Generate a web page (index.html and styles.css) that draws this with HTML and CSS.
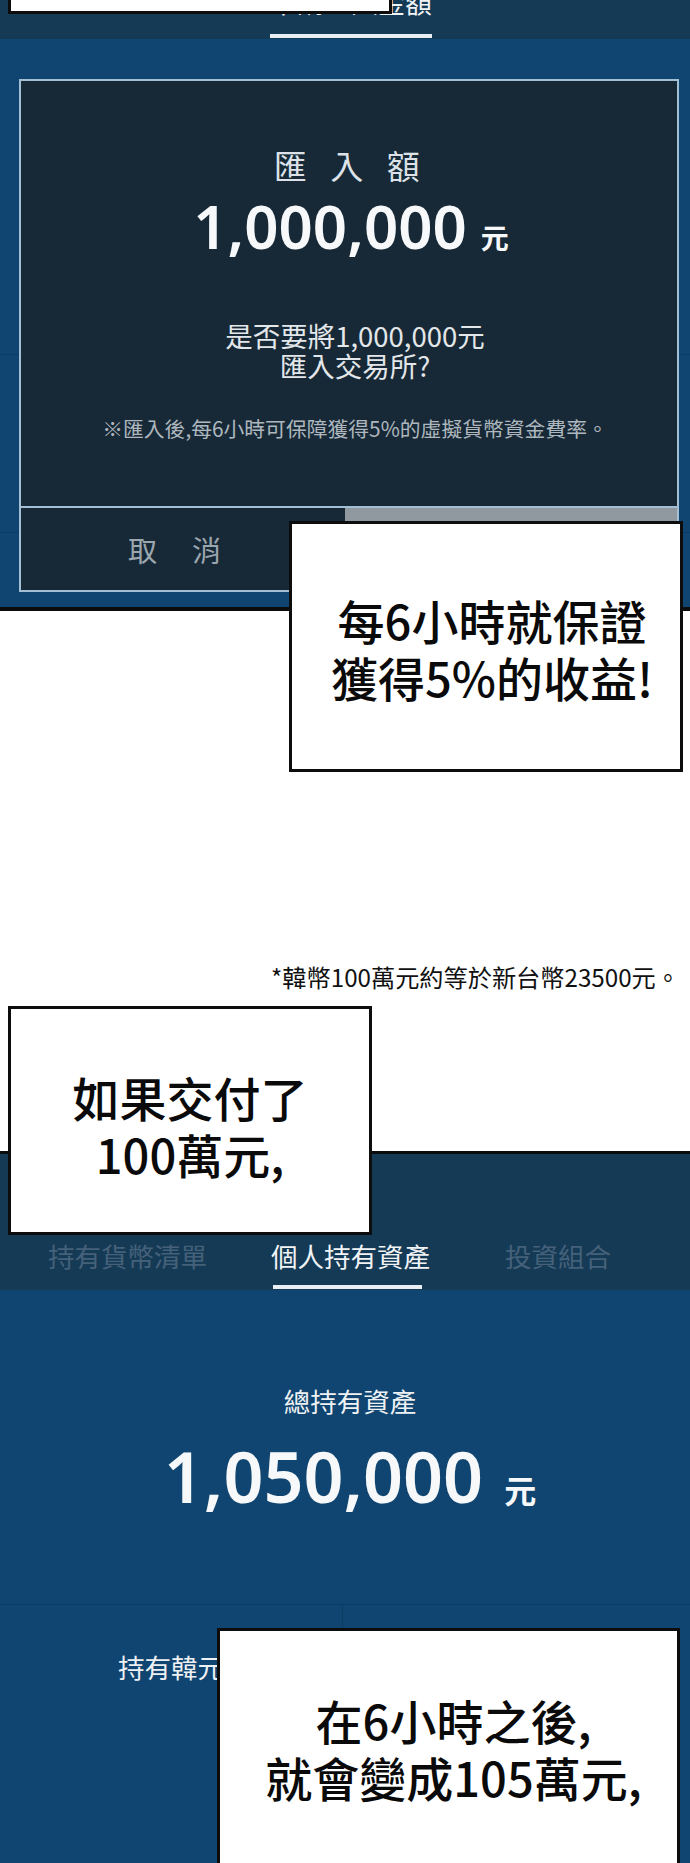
FILE: index.html
```html
<!DOCTYPE html>
<html lang="zh-Hant">
<head>
<meta charset="utf-8">
<title>匯入額</title>
<link rel="stylesheet" href="styles.css">
</head>
<body>
<div class="page">

  <section class="panel panel-top">
    <nav class="tabs tabs-top">
      <span class="tab tab-active">申請匯入金額</span>
    </nav>
    <div class="rows">
      <div class="row row-head"></div>
      <div class="row row-mid"></div>
      <div class="row row-rest"></div>
    </div>

    <div class="modal">
      <div class="modal-body">
        <p class="modal-title">匯入額</p>
        <p class="amount amount-md"><span class="amount-num">1,000,000</span><span class="amount-unit">元</span></p>
        <p class="modal-question">是否要將1,000,000元<br>匯入交易所?</p>
        <p class="modal-note">※匯入後,每6小時可保障獲得5%的虛擬貨幣資金費率。</p>
      </div>
      <div class="modal-actions">
        <span class="btn btn-cancel">取消</span>
        <span class="btn btn-confirm">確認</span>
      </div>
    </div>
  </section>

  <section class="gutter">
    <p class="footnote">*韓幣100萬元約等於新台幣23500元。</p>
  </section>

  <section class="panel panel-bottom">
    <nav class="tabs tabs-main">
      <span class="tab tab-muted">持有貨幣清單</span>
      <span class="tab tab-active tab-2">個人持有資產</span>
      <span class="tab tab-muted tab-3">投資組合</span>
    </nav>
    <div class="summary">
      <p class="summary-label">總持有資產</p>
      <p class="amount amount-lg"><span class="amount-num">1,050,000</span><span class="amount-unit">元</span></p>
    </div>
    <div class="holdings">
      <div class="cell cell-left"><span>持有韓元</span></div>
      <div class="cell"></div>
    </div>
  </section>

  <div class="caption caption-top"></div>
  <div class="caption caption-one">每6小時就保證<br>獲得5%的收益!</div>
  <div class="caption caption-two">如果交付了<br>100萬元,</div>
  <div class="caption caption-three">在6小時之後,<br>就會變成105萬元,</div>

</div>
</body>
</html>
```

FILE: styles.css
```css
body {
  margin: 0;
  background: #ffffff;
  font-family: "Noto Sans CJK TC", "Noto Sans", sans-serif;
}

.page {
  position: relative;
  width: 690px;
  height: 1863px;
  overflow: hidden;
  background: #ffffff;
}

p {
  margin: 0;
}

/* ---------- app panels ---------- */
.panel {
  background: #0f4570;
  color: #ffffff;
  position: relative;
  display: flex;
  flex-direction: column;
  box-sizing: border-box;
}

.panel-top {
  height: 611px;
  border-bottom: 4px solid #0b0c0e;
}

.panel-bottom {
  height: 712px;
  border-top: 3px solid #0b0c0e;
}

/* ---------- tab bar ---------- */
.tabs {
  display: flex;
  align-items: flex-end;
  background: #153a55;
  flex: none;
}

.tabs-top {
  height: 39px;
  padding-left: 270px;
}

.tabs-main {
  height: 136px;
  padding-left: 48px;
}

.tab {
  position: relative;
  font-size: 26.5px;
  line-height: 30px;
  padding-bottom: 19px;
  white-space: nowrap;
}

.tabs-top .tab {
  font-size: 27px;
  padding-bottom: 22px;
}

.tab-2 {
  margin-left: 64px;
}

.tab-3 {
  margin-left: 75px;
}

.tab-muted {
  color: #45617a;
}

.tab-active {
  color: #f1f4f6;
}

.tab-active::after {
  content: "";
  position: absolute;
  left: 2px;
  right: 8px;
  bottom: 1px;
  height: 4px;
  background: #e8eef2;
}

.tabs-top .tab-active::after {
  left: 0;
  right: 0;
}

/* ---------- rows under the dialog ---------- */
.rows {
  flex: 1;
  display: flex;
  flex-direction: column;
}

.row {
  border-bottom: 1px solid #0b3c61;
}

.row-head {
  height: 315px;
}

.row-mid {
  height: 177px;
}

.row-rest {
  flex: 1;
  border-bottom: none;
}

/* ---------- dialog ---------- */
.modal {
  position: absolute;
  left: 19px;
  top: 79px;
  width: 660px;
  height: 513px;
  box-sizing: border-box;
  border: 2px solid #a3bfd3;
  background: #172937;
  display: flex;
  flex-direction: column;
}

.modal-body {
  flex: 1;
  display: flex;
  flex-direction: column;
  align-items: center;
  padding: 64px 0 0 12px;
}

.modal-title {
  font-size: 33px;
  line-height: 40px;
  letter-spacing: 23.5px;
  padding-left: 7px;
  color: #dce2e7;
}

.amount {
  display: flex;
  align-items: baseline;
  color: #f6f8f9;
}

.amount-num {
  font-family: "Noto Sans", sans-serif;
  font-weight: 600;
}

.amount-unit {
  font-weight: 700;
  line-height: 1;
}

.amount-md {
  margin-top: 11px;
  margin-right: 8px;
  line-height: 61px;
}

.amount-md .amount-num {
  font-size: 60px;
}

.amount-md .amount-unit {
  font-size: 28px;
  margin-left: 14px;
}

.modal-question {
  margin-top: 63px;
  font-size: 27.5px;
  line-height: 30px;
  text-align: center;
  color: #e3e7ea;
}

.modal-note {
  margin-top: 36px;
  font-size: 20.8px;
  line-height: 24px;
  color: #aeb7be;
  white-space: nowrap;
}

.modal-actions {
  flex: none;
  height: 84px;
  box-sizing: border-box;
  border-top: 2px solid #a3bfd3;
  display: grid;
  grid-template-columns: 324px 1fr;
}

.btn {
  display: flex;
  align-items: center;
  justify-content: center;
  font-size: 29px;
  letter-spacing: 35px;
  padding-left: 18px;
}

.btn-cancel {
  color: #9ba6ae;
}

.btn-confirm {
  background: #8f999f;
  color: #172937;
}

/* ---------- white gutter ---------- */
.gutter {
  height: 540px;
  background: #ffffff;
}

.footnote {
  padding: 352px 10px 0 0;
  text-align: right;
  font-size: 24.2px;
  line-height: 28px;
  color: #111111;
  white-space: nowrap;
}

/* ---------- asset summary ---------- */
.summary {
  height: 315px;
  box-sizing: border-box;
  padding: 96px 0 0 10px;
  display: flex;
  flex-direction: column;
  align-items: center;
  border-bottom: 1px solid #0b3c61;
}

.summary-label {
  font-size: 26.5px;
  line-height: 30px;
  color: #eef1f4;
}

.amount-lg {
  margin-top: 24px;
  line-height: 72px;
}

.amount-lg .amount-num {
  font-size: 70px;
}

.amount-lg .amount-unit {
  font-size: 32px;
  margin-left: 21px;
}

.holdings {
  flex: 1;
  display: grid;
  grid-template-columns: 343px 1fr;
}

.cell {
  padding-top: 47px;
  text-align: center;
  font-size: 26.5px;
  line-height: 30px;
  color: #eef1f4;
}

.cell-left {
  border-right: 1px solid #0b3c61;
}

/* ---------- comic captions ---------- */
.caption {
  position: absolute;
  box-sizing: border-box;
  background: #ffffff;
  border: 3px solid #0d0d0d;
  text-align: center;
  font-size: 47px;
  line-height: 57px;
  font-weight: 500;
  color: #0a0a0a;
  white-space: nowrap;
}

.caption-top {
  left: 8px;
  top: -30px;
  width: 384px;
  height: 44px;
}

.caption-one {
  left: 289px;
  top: 521px;
  width: 394px;
  height: 251px;
  padding: 67px 0 0 12px;
}

.caption-two {
  left: 8px;
  top: 1006px;
  width: 364px;
  height: 229px;
  padding-top: 59px;
}

.caption-three {
  left: 217px;
  top: 1628px;
  width: 463px;
  height: 280px;
  padding: 60px 0 0 10px;
}
```
